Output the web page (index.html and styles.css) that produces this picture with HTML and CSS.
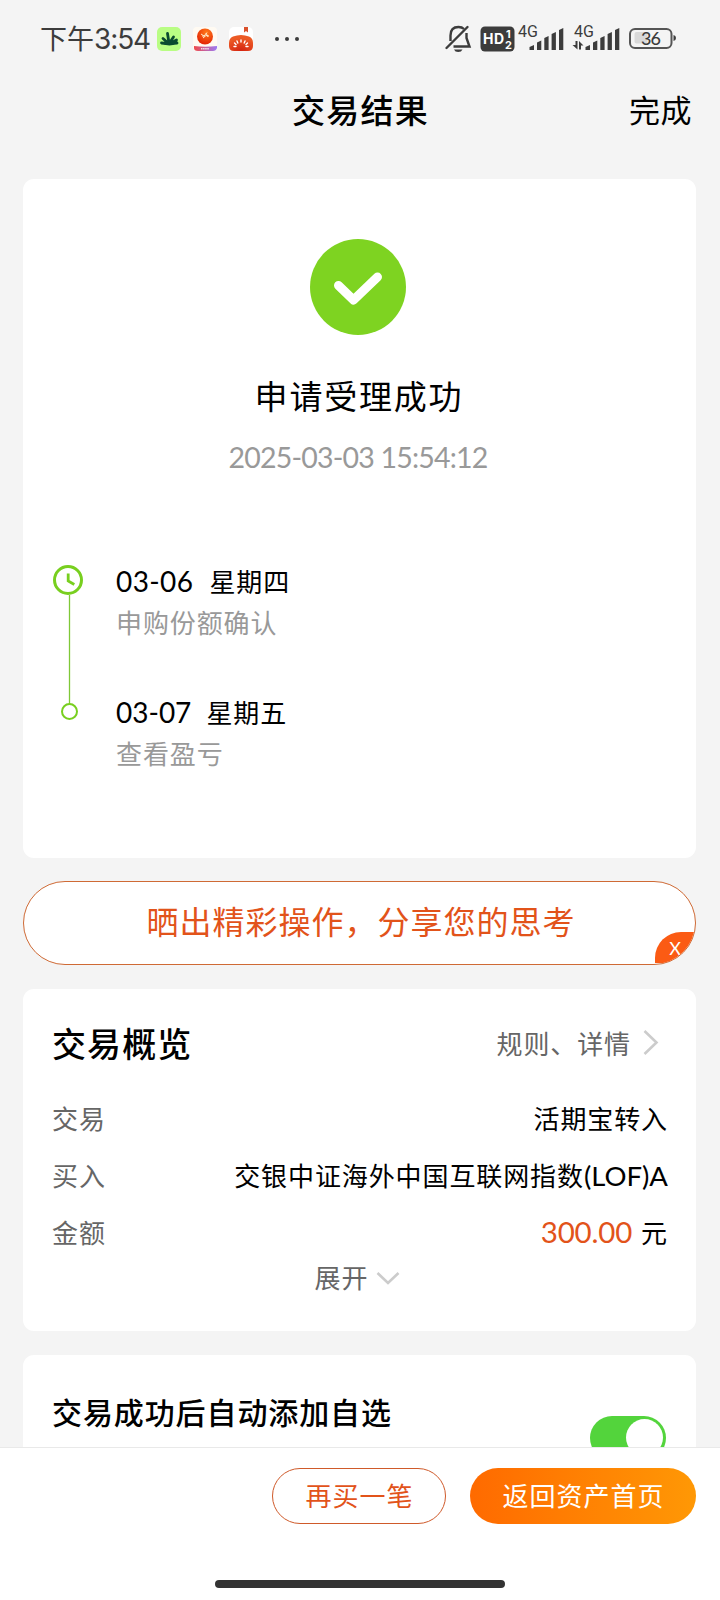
FILE: index.html
```html
<!DOCTYPE html>
<html lang="zh-CN">

<head>
    <meta charset="UTF-8">
    <meta name="viewport" content="width=device-width, initial-scale=1.0">
    <title>交易结果</title>

    <link rel="stylesheet" href="styles.css">
</head>

<body>
    <div class="status">
        <span class="hora">下午<span class="num">3:54</span></span>
        <svg class="apps" width="150" height="28" viewBox="0 0 150 28">
            <defs>
                <linearGradient id="cinta"><stop offset="0" stop-color="#f04a4a"/><stop offset="1" stop-color="#9b7af5"/></linearGradient>
                <radialGradient id="bola" cx=".6" cy=".25" r=".7"><stop offset="0" stop-color="#ff7a1a"/><stop offset="1" stop-color="#e62a05"/></radialGradient>
                <radialGradient id="tomate" cx=".5" cy="1" r=".8"><stop offset="0" stop-color="#d42310"/><stop offset="1" stop-color="#ec5a25"/></radialGradient>
            </defs>
            <rect x="0" y="2" width="24" height="24" rx="5" fill="#b9fd84"/>
            <g stroke="#0a4a30" stroke-width="2.800" stroke-linecap="round" fill="none">
                <path d="M12 18L10.500 8.500M12.500 18L16.500 12M11 18L6 13.500M14 18L19.500 15M9 18.500L4.500 18M14 18.500L20 18"/>
            </g>
            <path d="M4 17.500H20.500Q12.500 23.500 4 17.500Z" fill="#0a4a30"/>

            <rect x="36" y="2" width="24" height="24" rx="4" fill="#fffaf2"/>
            <path d="M37 21Q48 22.500 60 21V23Q59 26 56 26H41Q37 26 37 23Z" fill="url(#cinta)"/>
            <path d="M44 23.700H52" stroke="#fff" stroke-width="1.600" stroke-dasharray="1.500 .6" opacity=".8"/>
            <circle cx="48" cy="11.500" r="8" fill="url(#bola)"/>
            <path d="M44 9L47 11L50 7.500M46 13L49 10.500L52 11M49 8L51 12M45 11H48" stroke="#ffe9c8" stroke-width="1" fill="none"/>

            <rect x="72" y="2" width="24" height="24" rx="5" fill="#fff"/>
            <path d="M72 18Q72 13 76 11.500Q84 8.500 92 11.500Q96 13 96 18V21Q96 26 91 26H77Q72 26 72 21Z" fill="url(#tomate)"/>
            <path d="M87 2H91V7.500L89 6L87 7.500Z" fill="#d9512c"/>
            <g stroke="#fff" stroke-width="1.400" stroke-linecap="round">
                <path d="M84 15V17M80 16L80.800 18M88 16L87.200 18M77.500 18L79 19.500M90.500 18L89 19.500M77 21.500H79M89 21.500H91"/>
            </g>

            <g fill="#3c3c3c"><circle cx="120" cy="14" r="2"/><circle cx="130" cy="14" r="2"/><circle cx="140" cy="14" r="2"/></g>
        </svg>

        <svg class="senal" width="234" height="32" viewBox="0 0 234 32">
            <!-- campana -->
            <g fill="none" stroke="#3c3c3c" stroke-width="2.400">
                <path d="M6.500 18V12.500Q6.500 4 14.500 4Q18 4 20 6M22.500 10V15L25.500 23.500H9.500"/>
                <path d="M2.500 25L23.500 4" stroke-linecap="round"/>
                <path d="M10 26.500H18.500Q17.500 29 14.200 29Q11 29 10 26.500Z" fill="#3c3c3c" stroke="none"/>
            </g>
            <!-- HD -->
            <rect x="36.500" y="3.500" width="34" height="25" rx="4.500" fill="#3c3c3c"/>
            <g fill="#fff" class="hd">
                <text x="39" y="21" font-size="14" textLength="21">HD</text>
                <text x="62" y="14.500" font-size="11">1</text>
                <text x="61" y="26" font-size="11">2</text>
            </g>
            <g fill="#3c3c3c">
                <text x="74" y="14" class="red" textLength="20">4G</text>
                <path d="M85.500 27V24L90 22V27ZM93 27V19.500L97.300 17.500V27ZM100.300 27V15L104.600 13V27ZM107.600 27V11L111.900 9V27ZM115 27V7L119.300 5V27Z"/>
                <text x="130" y="14" class="red" textLength="20">4G</text>
                <path d="M141.500 27V24L146 22V27ZM149 27V19.500L153.300 17.500V27ZM156.300 27V15L160.600 13V27ZM163.600 27V11L167.900 9V27ZM171 27V7L175.300 5V27Z"/>
                <path d="M131.500 18H133.500V26.500L128.500 22H131.500ZM135 26.500V18L139.500 22.500H137V26.500Z"/>
            </g>
            <!-- bateria -->
            <rect x="190.500" y="9" width="13" height="11.500" rx="2" fill="#d9d9d9"/>
            <rect x="186" y="6" width="41.500" height="19" rx="5" fill="none" stroke="#555" stroke-width="2"/>
            <path d="M229.500 12Q232 12.500 232 15Q232 17.500 229.500 18Z" fill="#3c3c3c"/>
            <text x="197" y="22" class="bat" fill="#3c3c3c" textLength="20">36</text>
        </svg>
    </div>

    <header class="cabecera">
        <span></span>
        <h1>交易结果</h1>
        <a class="hecho">完成</a>
    </header>

    <main>
        <section class="card resultado">
            <svg class="ok" width="96" height="96" viewBox="0 0 96 96">
                <circle cx="48" cy="48" r="48" fill="#7ed321"/>
                <path d="M28.500 46.500L43.500 61L67.500 38" fill="none" stroke="#fff" stroke-width="9" stroke-linecap="round" stroke-linejoin="round"/>
            </svg>
            <h2>申请受理成功</h2>
            <p class="fecha num">2025-03-03 15:54:12</p>

            <div class="pasos">
                <svg width="34" height="160" viewBox="0 0 34 160">
                    <path d="M17.500 31V140" stroke="#7fc837" stroke-width="1.300"/>
                    <circle cx="16" cy="16" r="13.500" fill="none" stroke="#78cf1f" stroke-width="3"/>
                    <path d="M16.200 9.500V17L22.300 20.500" fill="none" stroke="#78cf1f" stroke-width="2.800"/>
                    <circle cx="17.500" cy="147.500" r="7.500" fill="#fff" stroke="#78cf1f" stroke-width="2"/>
                </svg>
                <div>
                    <div class="paso">
                        <p class="dia"><span class="num">03-06</span>星期四</p>
                        <p class="gris">申购份额确认</p>
                    </div>
                    <div class="paso">
                        <p class="dia"><span class="num siete">03-07</span>星期五</p>
                        <p class="gris">查看盈亏</p>
                    </div>
                </div>
            </div>
        </section>

        <div class="compartir">
            <span>晒出精彩操作，分享您的思考</span>
            <b class="cerrar">X</b>
        </div>

        <section class="card resumen">
            <div class="titulo">
                <h3>交易概览</h3>
                <a>规则、详情
                    <svg width="18" height="28" viewBox="0 0 18 28"><path d="M2.500 3L14.500 14.500L2.500 26" fill="none" stroke="#ccc" stroke-width="2.600"/></svg>
                </a>
            </div>
            <dl>
                <dt>交易</dt>
                <dd>活期宝转入</dd>
                <dt>买入</dt>
                <dd class="fondo">交银中证海外中国互联网指数<span class="num">(LOF)A</span></dd>
                <dt>金额</dt>
                <dd><span class="importe num">300.00</span>元</dd>
            </dl>
            <div class="abrir">展开
                <svg width="24" height="16" viewBox="0 0 24 16"><path d="M1.500 4L12 14L22.500 4" fill="none" stroke="#ccc" stroke-width="2.600"/></svg>
            </div>
        </section>

        <section class="card auto">
            <h4>交易成功后自动添加自选</h4>
            <span class="switch"></span>
        </section>
    </main>

    <footer>
        <div class="botones">
            <button class="otra">再买一笔</button>
            <button class="volver">返回资产首页</button>
        </div>
        <div class="barra"></div>
    </footer>
</body>

</html>
```
FILE: styles.css
```css
:root {
    --fondo: #f4f4f4;
    --naranja: #e2531a;
    --ff: "Noto Sans CJK SC", sans-serif;
}

* {
    box-sizing: border-box;
    margin: 0;
    padding: 0;
}

body {
    width: 720px;
    height: 1600px;
    display: flex;
    flex-direction: column;
    overflow: hidden;
    background: var(--fondo);
    color: #000;
    font-family: var(--ff);
    font-size: 26px;
    letter-spacing: 0.9px;
}

.num {
    font-family: Lato, var(--ff);
    letter-spacing: 0;
}

/* barra de estado */
.status {
    height: 78px;
    padding: 0 42px 0 40px;
    display: flex;
    align-items: center;
    color: #3c3c3c;
}

.hora {
    width: 117px;
    padding-bottom: 3px;
    font-size: 27px;
    letter-spacing: 0;
    white-space: nowrap;
}

.hora .num {
    font-family: Inter, var(--ff);
    font-size: 28px;
    letter-spacing: -1.1px;
}

.senal {
    margin-left: auto;
    letter-spacing: 0;
}

.hd {
    font-family: Inter, sans-serif;
    font-weight: 700;
}

.red {
    font-family: Roboto, sans-serif;
    font-size: 16px;
}

.bat {
    font-family: Lato, sans-serif;
    font-size: 18px;
    font-weight: 500;
}

.cabecera {
    height: 101px;
    padding: 0 28px 40px;
    display: grid;
    grid-template-columns: 1fr auto 1fr;
    align-items: center;
}

h1 {
    font-size: 33px;
    font-weight: 500;
    letter-spacing: 1.3px;
    padding-left: 1px;
}

.hecho {
    font-size: 31px;
    text-align: right;
    letter-spacing: 0.5px;
}

main {
    flex: 1;
    min-height: 0;
    overflow: hidden;
    padding: 0 24px 0 23px;
}

.card {
    background: #fff;
    border-radius: 11px;
}

.resultado {
    height: 679px;
    padding-top: 60px;
    text-align: center;
}

.ok {
    display: block;
    margin: 0 auto;
    transform: translateX(-2px);
}

h2 {
    margin-top: 35px;
    font-size: 33px;
    line-height: 50px;
    font-weight: 400;
    letter-spacing: 1.8px;
    padding-right: 1px;
}

.fecha {
    margin-top: 17px;
    padding-right: 3px;
    font-size: 28.5px;
    line-height: 40px;
    letter-spacing: -0.8px;
    color: #999;
}

.pasos {
    display: flex;
    gap: 30px;
    margin-top: 87px;
    padding-left: 29px;
    text-align: left;
}

.paso {
    height: 131px;
}

.dia {
    line-height: 34px;
}

.dia .num {
    font-size: 28px;
    letter-spacing: 0.4px;
    margin-right: 16px;
}

.dia .siete {
    letter-spacing: 0;
    margin-right: 15px;
}

.gris {
    margin-top: 7px;
    line-height: 34px;
    color: #999;
}

.compartir {
    position: relative;
    overflow: hidden;
    height: 84px;
    margin: 23px 0 24px;
    border: 1px solid #cf6a35;
    border-radius: 42px;
    background: #fff;
    color: var(--naranja);
    font-size: 32px;
    line-height: 77px;
    letter-spacing: 1px;
    text-indent: 3px;
    text-align: center;
}

.cerrar {
    position: absolute;
    right: 0;
    bottom: 1px;
    width: 40px;
    height: 31px;
    border-top-left-radius: 26px;
    background: #fb5b14;
    color: #fff;
    font: 18px/32px Lato, sans-serif;
    text-indent: 1px;
}

.resumen {
    height: 342px;
    padding: 29px 29px 0;
}

.titulo {
    height: 48px;
    display: flex;
    align-items: center;
    justify-content: space-between;
}

h3 {
    font-size: 34px;
    font-weight: 500;
    letter-spacing: 1.1px;
}

.titulo a {
    display: flex;
    align-items: center;
    gap: 11px;
    padding-right: 7px;
    color: #666;
}

dl {
    display: grid;
    grid-template-columns: 60px 1fr;
    grid-auto-rows: 57px;
    line-height: 57px;
    margin-top: 23px;
}

dt {
    color: #666;
}

dd {
    margin-right: -1px;
    text-align: right;
    white-space: nowrap;
}

.fondo .num {
    font-size: 27.5px;
}

.importe {
    margin-right: 9px;
    color: var(--naranja);
    font-size: 29.5px;
    letter-spacing: -0.2px;
}

.abrir {
    display: flex;
    align-items: center;
    justify-content: center;
    gap: 8px;
    margin-top: -1px;
    padding-right: 4px;
    line-height: 36px;
    color: #666;
}

.auto {
    height: 160px;
    margin-top: 24px;
    padding: 34px 30px 0 29px;
    display: flex;
    justify-content: space-between;
}

h4 {
    font-size: 30px;
    line-height: 44px;
    font-weight: 500;
}

.switch {
    width: 76px;
    height: 44px;
    margin-top: 27px;
    padding: 3px;
    border-radius: 22px;
    background: #53d43c;
}

.switch::after {
    content: "";
    display: block;
    width: 37px;
    height: 37px;
    margin-left: auto;
    border-radius: 50%;
    background: #fff;
}

footer {
    height: 153px;
    padding: 20px 24px 12px;
    display: flex;
    flex-direction: column;
    justify-content: space-between;
    border-top: 1px solid #e9e9e9;
    background: #fff;
}

.botones {
    display: flex;
    justify-content: flex-end;
    gap: 24px;
}

button {
    height: 56px;
    padding-bottom: 3px;
    border: 0;
    border-radius: 28px;
    font: 26px/50px var(--ff);
    letter-spacing: 1px;
    text-indent: 1px;
}

.otra {
    width: 174px;
    border: 1px solid #cf5a2a;
    background: #fff;
    color: var(--naranja);
}

.volver {
    width: 226px;
    background: linear-gradient(to right, #ff6a00, #ff9805);
    color: #fff;
}

.barra {
    width: 290px;
    height: 8px;
    margin: 0 auto;
    border-radius: 4px;
    background: #333;
}
```
